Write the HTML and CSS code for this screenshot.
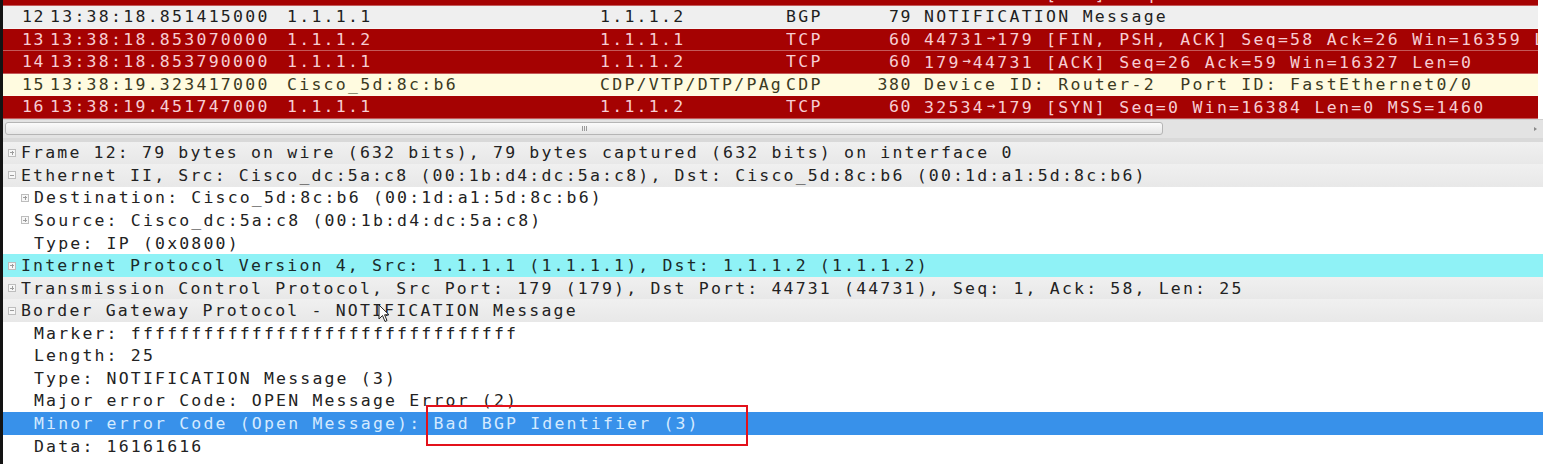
FILE: index.html
```html
<!DOCTYPE html>
<html>
<head>
<meta charset="utf-8">
<title>Wireshark - BGP Notification</title>
<link rel="stylesheet" href="styles.css">
</head>
<body>
<div class="app">
  <div class="plist">
    <div class="prow red first">
      <span class="c-no">11</span><span class="c-time">13:38:18.849786000</span><span class="c-src">1.1.1.1</span><span class="c-dst">1.1.1.2</span><span class="c-proto">TCP</span><span class="c-len">60</span><span class="c-info">179<span class="arr">→</span>44731 [ACK] Seq=1 Ack=58 Win=16327 Len=0</span>
    </div>
    <div class="prow plain">
      <span class="c-no">12</span><span class="c-time">13:38:18.851415000</span><span class="c-src">1.1.1.1</span><span class="c-dst">1.1.1.2</span><span class="c-proto">BGP</span><span class="c-len">79</span><span class="c-info">NOTIFICATION Message</span>
    </div>
    <div class="prow red">
      <span class="c-no">13</span><span class="c-time">13:38:18.853070000</span><span class="c-src">1.1.1.2</span><span class="c-dst">1.1.1.1</span><span class="c-proto">TCP</span><span class="c-len">60</span><span class="c-info">44731<span class="arr">→</span>179 [FIN, PSH, ACK] Seq=58 Ack=26 Win=16359 Len=0</span>
    </div>
    <div class="prow red">
      <span class="c-no">14</span><span class="c-time">13:38:18.853790000</span><span class="c-src">1.1.1.1</span><span class="c-dst">1.1.1.2</span><span class="c-proto">TCP</span><span class="c-len">60</span><span class="c-info">179<span class="arr">→</span>44731 [ACK] Seq=26 Ack=59 Win=16327 Len=0</span>
    </div>
    <div class="prow cdp">
      <span class="c-no">15</span><span class="c-time">13:38:19.323417000</span><span class="c-src">Cisco_5d:8c:b6</span><span class="c-dst">CDP/VTP/DTP/PAgP/UDLD</span><span class="c-proto">CDP</span><span class="c-len">380</span><span class="c-info">Device ID: Router-2  Port ID: FastEthernet0/0</span>
    </div>
    <div class="prow red">
      <span class="c-no">16</span><span class="c-time">13:38:19.451747000</span><span class="c-src">1.1.1.1</span><span class="c-dst">1.1.1.2</span><span class="c-proto">TCP</span><span class="c-len">60</span><span class="c-info">32534<span class="arr">→</span>179 [SYN] Seq=0 Win=16384 Len=0 MSS=1460</span>
    </div>
  </div>

  <div class="hscroll">
    <div class="thumb"><span class="grip"></span></div>
    <span class="sarrow"></span>
  </div>
  <div class="divider"></div>

  <div class="details">
    <div class="drow hdr"><span class="tw"><span class="exp plus"></span></span><span class="txt">Frame 12: 79 bytes on wire (632 bits), 79 bytes captured (632 bits) on interface 0</span></div>
    <div class="drow hdr"><span class="tw"><span class="exp minus"></span></span><span class="txt">Ethernet II, Src: Cisco_dc:5a:c8 (00:1b:d4:dc:5a:c8), Dst: Cisco_5d:8c:b6 (00:1d:a1:5d:8c:b6)</span></div>
    <div class="drow l1"><span class="tw"><span class="exp plus"></span></span><span class="txt">Destination: Cisco_5d:8c:b6 (00:1d:a1:5d:8c:b6)</span></div>
    <div class="drow l1"><span class="tw"><span class="exp plus"></span></span><span class="txt">Source: Cisco_dc:5a:c8 (00:1b:d4:dc:5a:c8)</span></div>
    <div class="drow l1"><span class="tw"></span><span class="txt">Type: IP (0x0800)</span></div>
    <div class="drow ip"><span class="tw"><span class="exp plus"></span></span><span class="txt">Internet Protocol Version 4, Src: 1.1.1.1 (1.1.1.1), Dst: 1.1.1.2 (1.1.1.2)</span></div>
    <div class="drow hdr"><span class="tw"><span class="exp plus"></span></span><span class="txt">Transmission Control Protocol, Src Port: 179 (179), Dst Port: 44731 (44731), Seq: 1, Ack: 58, Len: 25</span></div>
    <div class="drow hdr"><span class="tw"><span class="exp minus"></span></span><span class="txt">Border Gateway Protocol - NOTIFICATION Message</span></div>
    <div class="drow l1"><span class="tw"></span><span class="txt">Marker: ffffffffffffffffffffffffffffffff</span></div>
    <div class="drow l1"><span class="tw"></span><span class="txt">Length: 25</span></div>
    <div class="drow l1"><span class="tw"></span><span class="txt">Type: NOTIFICATION Message (3)</span></div>
    <div class="drow l1"><span class="tw"></span><span class="txt">Major error Code: OPEN Message Error (2)</span></div>
    <div class="drow l1 sel"><span class="tw"></span><span class="txt">Minor error Code (Open Message): Bad BGP Identifier (3)</span></div>
    <div class="drow l1"><span class="tw"></span><span class="txt">Data: 16161616</span></div>
  </div>

  <div class="callout"></div>
  <svg class="cursor" width="12" height="19" viewBox="0 0 12 19"><path d="M1 1 L1 15 L4.5 11.5 L7 17.5 L9 16.6 L6.6 10.8 L11 10.8 Z" fill="#ffffff" stroke="#222" stroke-width="1" stroke-linejoin="round"/></svg>
</div>
</body>
</html>
```

FILE: styles.css
```css
* { box-sizing: border-box; }

html, body {
  margin: 0;
  padding: 0;
  background: #ffffff;
}

body {
  font-family: "DejaVu Sans Mono", "Liberation Mono", monospace;
  font-size: 16.5px;
  letter-spacing: 2.17px;
  color: #222222;
  overflow: hidden;
}

.app {
  position: relative;
  width: 1543px;
  height: 464px;
  overflow: hidden;
  border-left: 3px solid #131313;
  background: #ffffff;
}

/* ---------- packet list ---------- */
.plist {
  display: flex;
  flex-direction: column;
  height: 118.5px;
  overflow: hidden;
  padding-right: 5px;
  letter-spacing: 2.27px;
}

.prow {
  flex: none;
  display: grid;
  grid-template-columns: 42px 242px 313px 186px 72px 54px 1fr;
  align-items: center;
  height: 22.5px;
  white-space: pre;
  border-bottom: 1px solid rgba(255, 255, 255, 0.35);
}

.prow.first { margin-top: -16.5px; }

.prow > span { overflow: hidden; white-space: pre; }

.c-no, .c-len { text-align: right; letter-spacing: 1.6px; }
.c-time { padding-left: 5px; }
.c-dst { width: 181px; }
.c-info { padding-left: 12px; }

.arr {
  display: inline-block;
  width: 12.2px;
  overflow: hidden;
  text-align: center;
  letter-spacing: 0;
  font-size: 14px;
  vertical-align: baseline;
}

.prow.red {
  background: #a50202;
  color: #f7cdd3;
}

.prow.plain {
  background: #efefef;
  color: #1e1e1e;
}

.prow.cdp {
  background: #fffbe0;
  color: #3b3a22;
}

/* ---------- horizontal scrollbar ---------- */
.hscroll {
  height: 19px;
  display: flex;
  align-items: center;
  background: #e3e3e3;
  padding-left: 2px;
  padding-right: 6px;
  border-top: 1px solid #cfcfcf;
}

.thumb {
  width: 1158px;
  height: 13px;
  border: 1px solid #b5b5b5;
  border-radius: 3px;
  background: linear-gradient(#fbfbfb, #e6e6e6);
  display: flex;
  align-items: center;
  justify-content: center;
}

.grip {
  width: 5px;
  height: 5px;
  background: repeating-linear-gradient(90deg, #9a9a9a 0 1px, transparent 1px 2px);
}

.sarrow {
  margin-left: auto;
  width: 0;
  height: 0;
  border-top: 2px solid transparent;
  border-bottom: 2px solid transparent;
  border-left: 3px solid #8a8a8a;
}

.divider {
  height: 4px;
  background: #d9d9d9;
}

/* ---------- packet details ---------- */
.details {
  display: flex;
  flex-direction: column;
}

.drow {
  display: flex;
  align-items: center;
  height: 22.57px;
  padding-left: 3px;
  white-space: pre;
}

.drow.l1 { padding-left: 16px; }

.tw {
  flex: none;
  width: 15px;
  display: flex;
  align-items: center;
}

.exp {
  position: relative;
  width: 8px;
  height: 8px;
  margin-left: 2px;
  border: 1px solid #bdbdbd;
  background: #f7f7f7;
}

.exp::before {
  content: "";
  position: absolute;
  left: 1px;
  top: 2.5px;
  width: 4px;
  height: 1px;
  background: #9c9c9c;
}

.exp.plus::after {
  content: "";
  position: absolute;
  left: 2.5px;
  top: 1px;
  width: 1px;
  height: 4px;
  background: #9c9c9c;
}

.drow.hdr {
  background: linear-gradient(#f0f0f0, #e8e8e8);
}

.drow.ip {
  background: #8ff2f6;
  color: #1a2a2a;
}

.drow.sel {
  background: #3891ea;
  color: #d4eaff;
}

/* ---------- overlays ---------- */
.callout {
  position: absolute;
  left: 423px;
  top: 405px;
  width: 322px;
  height: 41px;
  border: 2px solid #e3111b;
}

.cursor {
  position: absolute;
  left: 375px;
  top: 304px;
}
```
